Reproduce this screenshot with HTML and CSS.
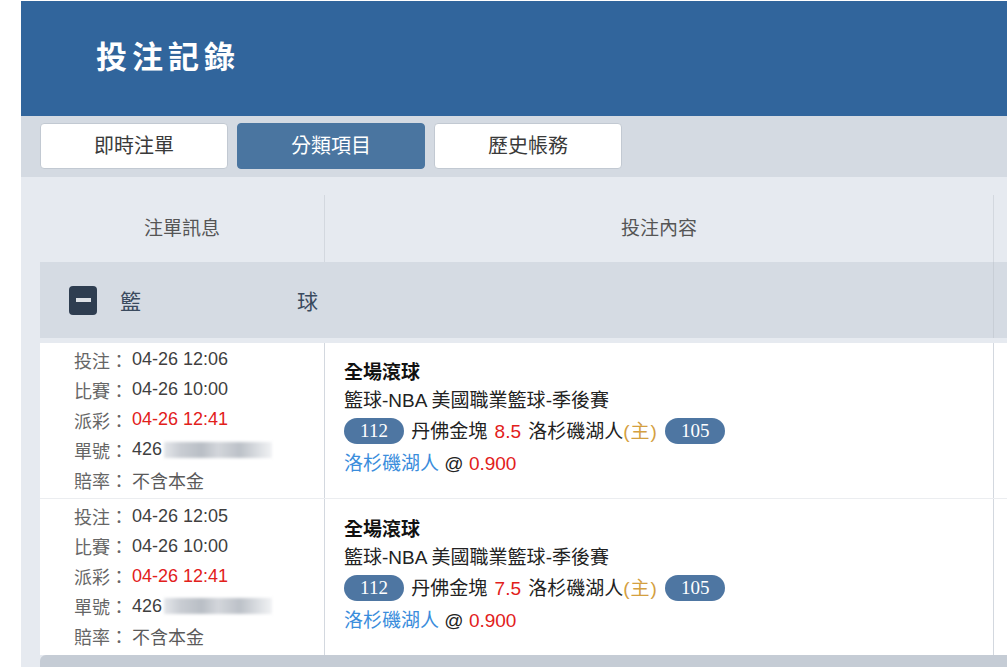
FILE: index.html
```html
<!DOCTYPE html>
<html lang="zh-Hant">
<head>
  <meta charset="UTF-8">
  <title>投注記錄</title>
  <link rel="stylesheet" href="styles.css">
</head>
<body>

  <div class="page">
    <!-- 標題 -->
    <div class="header">
      <h1 class="title">投注記錄</h1>
    </div>

    <!-- 分頁 -->
    <div class="tabs">
      <a class="tab">即時注單</a>
      <a class="tab active">分類項目</a>
      <a class="tab">歷史帳務</a>
    </div>

    <div class="content">
      <div class="grid head">
        <div class="cell">注單訊息</div>
        <div class="cell">投注內容</div>
        <div class="cell"></div>
      </div>

      <!-- 籃球 -->
      <div class="category">
        <div class="cat-main">
          <span class="toggle"><span class="bar"></span></span>
          <span class="cat-name"><span>籃</span><span>球</span></span>
        </div>
        <div class="cat-edge"></div>
      </div>

      <div class="rows">
        <div class="grid bet">
          <div class="info">
            <div class="line"><span class="label">投注：</span><span class="value">04-26 12:06</span></div>
            <div class="line"><span class="label">比賽：</span><span class="value">04-26 10:00</span></div>
            <div class="line"><span class="label">派彩：</span><span class="value red">04-26 12:41</span></div>
            <div class="line"><span class="label">單號：</span><span class="value">426<span class="masked"></span></span></div>
            <div class="line"><span class="label">賠率：</span><span class="value muted">不含本金</span></div>
          </div>
          <div class="detail">
            <div class="play">全場滾球</div>
            <div class="league">籃球-NBA 美國職業籃球-季後賽</div>
            <div class="score"><span class="badge">112</span> 丹佛金塊 <span class="red">8.5</span> 洛杉磯湖人<span class="home">(主)</span> <span class="badge">105</span></div>
            <div class="pick"><span class="team">洛杉磯湖人</span> @ <span class="red">0.900</span></div>
          </div>
          <div class="edge"></div>
        </div>

        <div class="grid bet">
          <div class="info">
            <div class="line"><span class="label">投注：</span><span class="value">04-26 12:05</span></div>
            <div class="line"><span class="label">比賽：</span><span class="value">04-26 10:00</span></div>
            <div class="line"><span class="label">派彩：</span><span class="value red">04-26 12:41</span></div>
            <div class="line"><span class="label">單號：</span><span class="value">426<span class="masked"></span></span></div>
            <div class="line"><span class="label">賠率：</span><span class="value muted">不含本金</span></div>
          </div>
          <div class="detail">
            <div class="play">全場滾球</div>
            <div class="league">籃球-NBA 美國職業籃球-季後賽</div>
            <div class="score"><span class="badge">112</span> 丹佛金塊 <span class="red">7.5</span> 洛杉磯湖人<span class="home">(主)</span> <span class="badge">105</span></div>
            <div class="pick"><span class="team">洛杉磯湖人</span> @ <span class="red">0.900</span></div>
          </div>
          <div class="edge"></div>
        </div>
      </div>

      <div class="category next"></div>
    </div>
  </div>

</body>
</html>
```

FILE: styles.css
```css
html, body {
  margin: 0;
  padding: 0;
  background-color: #fff;
  overflow: hidden;
}
body {
  font-family: 'Liberation Sans', 'Noto Sans CJK TC', sans-serif;
  color: #333;
  font-size: 18px;
}
.page {
  margin: 1px 0 0 21px;
  width: 986px;
}
.header {
  height: 115px;
  background-color: #31659c;
  display: flex;
  align-items: center;
  padding-left: 75px;
}
.title {
  margin: 0;
  color: #fff;
  font-family: 'Liberation Serif', 'Noto Sans CJK TC', serif;
  font-size: 31px;
  font-weight: bold;
  letter-spacing: 5px;
  line-height: 1;
  padding-bottom: 2px;
}
.tabs {
  height: 61px;
  box-sizing: border-box;
  background-color: #d4dae2;
  padding: 7px 19px 0;
  display: flex;
  gap: 9px;
}
.tab {
  width: 188px;
  height: 46px;
  box-sizing: border-box;
  border: 1px solid #c2c9d2;
  border-radius: 4px;
  background-color: #fff;
  color: #3a3a3a;
  font-family: 'Noto Sans CJK TC', sans-serif;
  font-size: 20px;
  line-height: 42px;
  text-align: center;
  cursor: pointer;
}
.tab.active {
  background-color: #4a75a0;
  border-color: #4a75a0;
  color: #fff;
}
.content {
  background-color: #e6eaf0;
  padding: 18px 0 0 19px;
  height: 500px;
  overflow: hidden;
}
.grid {
  display: grid;
  grid-template-columns: 284px 669px 1fr;
}
.head {
  height: 67px;
}
.head .cell {
  display: flex;
  align-items: center;
  justify-content: center;
  padding-bottom: 4px;
  color: #555;
  font-family: 'Noto Sans CJK TC', sans-serif;
  font-size: 19px;
}
.head .cell + .cell,
.bet > div + div {
  border-left: 1px solid #d3d8df;
}
.category {
  height: 76px;
  background-color: #d5dbe3;
  display: grid;
  grid-template-columns: 953px 1fr;
}
.cat-main {
  display: flex;
  align-items: center;
  padding-left: 29px;
}
.cat-edge {
  border-left: 1px solid #c8ced6;
}
.toggle {
  width: 28px;
  height: 29px;
  border-radius: 4px;
  background-color: #2e3d50;
  display: flex;
  align-items: center;
  justify-content: center;
}
.toggle .bar {
  width: 15px;
  height: 4px;
  background-color: #dde1e6;
}
.cat-name {
  margin-left: 23px;
  width: 198px;
  display: flex;
  justify-content: space-between;
  color: #3a4a5e;
  font-family: 'Noto Sans CJK TC', sans-serif;
  font-size: 21px;
  line-height: 1;
}
.rows {
  margin-top: 5px;
}
.bet {
  background-color: #fff;
  height: 155px;
}
.bet + .bet {
  border-top: 1px solid #ebedf0;
  height: 156px;
}
.info {
  display: flex;
  flex-direction: column;
  justify-content: center;
  padding: 0 0 2px 34px;
}
.line {
  display: flex;
  height: 30px;
  align-items: center;
}
.label {
  width: 58px;
  color: #666;
  font-family: 'Noto Sans CJK TC', sans-serif;
  font-size: 18px;
}
.value {
  color: #3f3f3f;
  font-size: 18px;
  display: flex;
  align-items: center;
}
.value.muted {
  color: #5a5a5a;
}
.masked {
  display: inline-block;
  width: 108px;
  height: 16px;
  margin-left: 2px;
  background: linear-gradient(90deg, #e4e6ea 0%, #c9cdd3 15%, #b9bec5 35%, #d3d6db 50%, #bcc1c8 70%, #dcdfe3 88%, #f1f2f4 100%);
  filter: blur(1.5px);
}
.red {
  color: #e2201b;
}
.detail {
  display: flex;
  flex-direction: column;
  justify-content: center;
  padding: 0 0 3px 19px;
  color: #222;
  font-size: 19px;
}
.play {
  font-weight: bold;
  color: #111;
  line-height: 28px;
}
.league {
  line-height: 28px;
}
.score {
  line-height: 34px;
  word-spacing: 2px;
}
.home {
  color: #d4a040;
  letter-spacing: 1px;
}
.badge {
  display: inline-block;
  vertical-align: middle;
  width: 60px;
  height: 26px;
  margin-top: -3px;
  border-radius: 13px;
  background-color: #4e76a2;
  color: #fff;
  font-family: 'Liberation Serif', serif;
  font-size: 19px;
  line-height: 26px;
  text-align: center;
  word-spacing: 0;
}
.pick {
  line-height: 30px;
}
.team {
  color: #3a8ddc;
}
.category.next {
  height: 60px;
  background-color: #c5ccd5;
  border-top-left-radius: 6px;
  display: block;
}
```
